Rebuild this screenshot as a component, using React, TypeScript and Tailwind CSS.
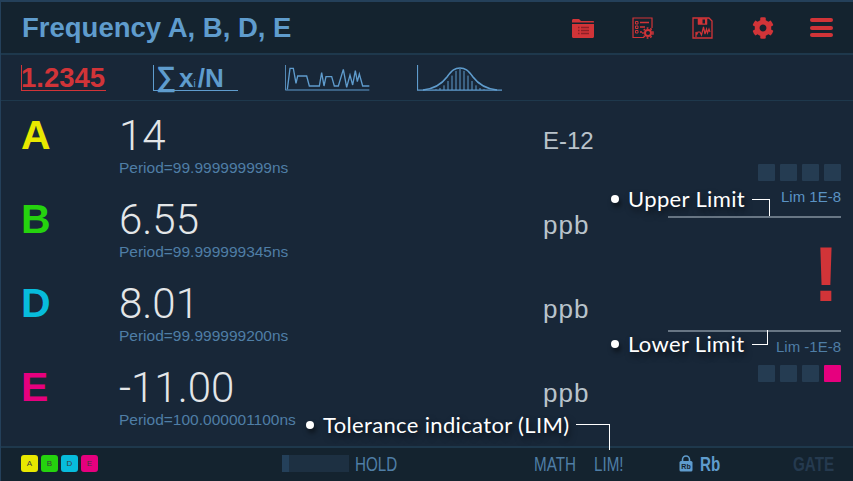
import React from 'react';
import { FaCog } from 'react-icons/fa';

const sans = 'font-["Liberation_Sans",Arial,sans-serif]';

const channels = [
  { letter: 'A', color: 'text-[#e8e800]', value: '14', period: 'Period=99.999999999ns', unit: 'E-12', unitClass: 'text-[24px]' },
  { letter: 'B', color: 'text-[#25d30e]', value: '6.55', period: 'Period=99.999999345ns', unit: 'ppb', unitClass: 'text-[26px] tracking-[1px]' },
  { letter: 'D', color: 'text-[#07bcdc]', value: '8.01', period: 'Period=99.999999200ns', unit: 'ppb', unitClass: 'text-[26px] tracking-[1px]' },
  { letter: 'E', color: 'text-[#e6007e]', value: '-11.00', period: 'Period=100.000001100ns', unit: 'ppb', unitClass: 'text-[26px] tracking-[1px]' },
];

const chips = [
  { letter: 'A', bg: 'bg-[#e8e800]' },
  { letter: 'B', bg: 'bg-[#25d30e]' },
  { letter: 'D', bg: 'bg-[#07bcdc]' },
  { letter: 'E', bg: 'bg-[#e6007e]' },
];

function FolderIcon() {
  return (
    <svg width="24" height="22" viewBox="0 0 24 22" fill="none">
      <path d="M1 3.500C1 2.700 1.600 2 2.400 2H8l2 2H22c.6 0 1 .4 1 1v.6H1z" fill="#d13438" />
      <path d="M1 7h22v12.500c0 .8-.6 1.500-1.500 1.500h-19C1.600 21 1 20.300 1 19.500z" fill="#d13438" />
      <path d="M7 10.500h1.500M7 13.500h1.500M7 16.500h1.500M10 10.500h8M10 13.500h8M10 16.500h8" stroke="#8e1f26" strokeWidth="1.600" />
    </svg>
  );
}

function ConfigIcon() {
  return (
    <svg width="22" height="22" viewBox="0 0 22 22" fill="none" stroke="#d13438">
      <path d="M12 20.500H1V1h19v10" strokeWidth="1.200" />
      <path d="M3.500 4.500h2.500v2.500H3.500zM3.500 9h2.500v2.500H3.500zM3.500 13.500h2.500v2.500H3.500z" strokeWidth="1" />
      <path d="M8 5.500h9M8 10h5M8 15h2" strokeWidth="1.400" />
      <circle cx="16" cy="16" r="3" strokeWidth="2" />
      <circle cx="16" cy="16" r="5" strokeWidth="1.500" strokeDasharray="1.800 1.800" />
    </svg>
  );
}

function SaveIcon() {
  return (
    <svg width="21" height="22" viewBox="0 0 21 22" fill="none" stroke="#d13438">
      <path d="M1 1h16l3 3v17H1z" strokeWidth="1.300" />
      <path d="M6 1.500h9v6H6z" fill="#d13438" strokeWidth="0.500" />
      <path d="M10.500 2.500h2.500v4h-2.500z" fill="#14232f" stroke="none" />
      <path d="M4 20v-5l1 2 1-2h2l1.500 3 2-8 1.500 7 1.500-5 1 4 1.500-4 1 3" strokeWidth="1.200" />
    </svg>
  );
}

function LockIcon() {
  return (
    <svg width="14" height="17" viewBox="0 0 14 17" fill="none">
      <path d="M3.500 7V4.500a3.500 3.500 0 0 1 7 0V7" stroke="#5f9ccd" strokeWidth="1.600" />
      <rect x="0.500" y="6" width="13" height="10.500" rx="1.500" fill="#5f9ccd" />
      <text x="7" y="14" textAnchor="middle" fontSize="7" fontWeight="700" fontFamily="Liberation Sans" fill="#14232f">Rb</text>
    </svg>
  );
}

function WaveChart() {
  return (
    <svg width="85" height="26" viewBox="855 195 255 78" fill="none" stroke="#5f9ccd" strokeWidth="4">
      <path d="M856 195V270H1108" strokeWidth="3" />
      <path d="M862 268L870 205H880L888 250L893 228H920L928 258H958L965 218L972 258L978 230H995L1003 258H1015L1030 208L1040 262L1050 225L1058 255L1066 212L1072 245L1078 222L1088 258H1108" />
    </svg>
  );
}

function BellChart() {
  const bars = [19, 23, 27, 31, 35, 39, 43, 47, 51, 55, 59, 63, 67];
  return (
    <svg width="85" height="26" viewBox="0 0 85 26" fill="none" stroke="#5f9ccd">
      <path d="M0.500 0V25.200H85" strokeWidth="1.200" />
      <path d="M6 25C16 24 24 20 30 12C35 5 38 3 43 3C48 3 51 5 56 12C62 20 70 24 80 25" strokeWidth="1.600" />
      {bars.map((x) => (
        <path key={x} d={`M${x} ${25 - 21 * Math.exp(-((x - 43) ** 2) / 170)}V25`} strokeWidth="1" />
      ))}
    </svg>
  );
}

function Squares({ lit }: { lit?: boolean }) {
  return (
    <div className="flex gap-[5px]">
      <div className="w-[17px] h-[17px] rounded-[1px] bg-[#253c52]" />
      <div className="w-[17px] h-[17px] rounded-[1px] bg-[#253c52]" />
      <div className="w-[17px] h-[17px] rounded-[1px] bg-[#253c52]" />
      <div className={`w-[17px] h-[17px] rounded-[1px] ${lit ? 'bg-[#e6007e]' : 'bg-[#253c52]'}`} />
    </div>
  );
}

function Callout({ label, className }: { label: string; className: string }) {
  return (
    <div className={`absolute flex items-center ${className}`}>
      <div className="w-[8px] h-[8px] rounded-full bg-white mr-[9px] [box-shadow:2px_4px_5px_rgba(0,0,0,0.5)]" />
      <span className='font-["Lato",sans-serif] text-[22px] tracking-[0.35px] leading-[26px] whitespace-nowrap text-white [text-shadow:2px_4px_6px_rgba(0,0,0,0.55)]'>
        {label}
      </span>
    </div>
  );
}

export default function App() {
  return (
    <div className={`relative w-[853px] h-[481px] overflow-hidden flex flex-col bg-[#182738] border-l border-[#24405a] ${sans}`}>
      {/* Title bar */}
      <header className="h-[55px] shrink-0 flex items-center pl-[21px] bg-[#14232f] border-t-2 border-b-2 border-t-[#24405a] border-b-[#1e384c]">
        <h1 className="text-[27.500px] leading-none font-bold text-[#5f9ccd] w-[549px]">Frequency A, B, D, E</h1>
        <div className="flex items-center w-[270px]">
          <div className="w-[61px]"><FolderIcon /></div>
          <div className="w-[60px]"><ConfigIcon /></div>
          <div className="w-[60px]"><SaveIcon /></div>
          <div className="w-[58px]"><FaCog className="w-[22px] h-[22px] text-[#d13438]" /></div>
          <div className="flex flex-col gap-[3.500px] w-[23px]">
            <div className="h-[4px] rounded-full bg-[#d13438]" />
            <div className="h-[4px] rounded-full bg-[#d13438]" />
            <div className="h-[4px] rounded-full bg-[#d13438]" />
          </div>
        </div>
      </header>

      {/* Display mode tabs */}
      <nav className="h-[46px] shrink-0 flex items-center gap-[47px] pl-[20px] border-b border-[#1e384c]">
        <div className="w-[85px] h-[26px] flex items-end border-l border-b border-[#d13438] text-[27.500px] leading-[25px] font-bold text-[#d13438]">
          <span className="-ml-[1px]">1.2345</span>
        </div>
        <div className="w-[85px] h-[26px] flex items-end border-l border-b border-[#5f9ccd] text-[#5f9ccd] text-[26px] leading-[24px] font-bold whitespace-nowrap">
          <span className="ml-[2px] text-[28px] leading-[26px]">∑</span>
          <span className="ml-[3px]">x</span>
          <span className="text-[10px] leading-[12px] font-normal mr-[2px]">i</span>
          <span>/N</span>
        </div>
        <WaveChart />
        <BellChart />
      </nav>

      {/* Readings */}
      <main className="flex-1 min-h-0 flex">
        <div className="pl-[20px] pt-[11px] flex flex-col">
          {channels.map((c) => (
            <div key={c.letter} className="h-[84px] shrink-0 flex">
              <div className={`w-[98px] text-[41px] leading-[46px] font-bold ${c.color}`}>{c.letter}</div>
              <div className="w-[424px]">
                <div className='font-["Roboto",sans-serif] font-light text-[42px] leading-[46px] text-[#e3e6e8] mt-[1px]'>{c.value}</div>
                <div className="text-[15.500px] leading-[18px] text-[#4f7ea6]">{c.period}</div>
              </div>
              <div className={`leading-[28px] text-[#b9c3cb] pt-[15px] ${c.unitClass}`}>{c.unit}</div>
            </div>
          ))}
        </div>

        {/* Tolerance limits */}
        <div className="ml-auto mr-[12px] w-[174px] flex flex-col items-end pt-[63px]">
          <Squares />
          <div className="mt-[7px] text-[15px] leading-[17px] text-[#5b93c4]">Lim 1E-8</div>
          <div className="mt-[11px] w-[173px] h-[2px] bg-[#687684]" />
          <div className="h-[112px] w-full flex items-center justify-end pr-[2px] text-[78px] leading-none font-bold text-[#d13438]">!</div>
          <div className="w-[173px] h-[2px] bg-[#687684]" />
          <div className="mt-[6px] text-[15px] leading-[17px] text-[#4f7ea6]">Lim -1E-8</div>
          <div className="mt-[10px]"><Squares lit /></div>
        </div>
      </main>

      {/* Status bar */}
      <footer className="h-[35px] shrink-0 flex items-center pl-[20px] pb-[2px] bg-[#14232f] border-t-2 border-[#1e384c] text-[20px] leading-none text-[#4f7ea6]">
        <div className="flex gap-[3px] w-[261px]">
          {chips.map((c) => (
            <div key={c.letter} className={`w-[17px] h-[17px] rounded-[3px] flex items-center justify-center text-[8px] text-[#3b3b3b] ${c.bg}`}>
              {c.letter}
            </div>
          ))}
        </div>
        <div className="w-[67px] h-[17px] flex bg-[#1d3042]">
          <div className="w-[7px] bg-[#24405a]" />
        </div>
        <div className="ml-[6px] w-[179px]"><span className="inline-block origin-left scale-x-[0.76]">HOLD</span></div>
        <div className="w-[60px]"><span className="inline-block origin-left scale-x-[0.76]">MATH</span></div>
        <div className="w-[85px]"><span className="inline-block origin-left scale-x-[0.76]">LIM!</span></div>
        <div className="w-[21px]"><LockIcon /></div>
        <div className="w-[93px] font-bold text-[#5f9ccd]"><span className="inline-block origin-left scale-x-[0.76]">Rb</span></div>
        <div className="font-bold text-[#253a4f]"><span className="inline-block origin-left scale-x-[0.76]">GATE</span></div>
      </footer>

      {/* Annotations lying over the display */}
      <Callout label="Upper Limit" className="left-[610px] top-[186px]" />
      <div className="absolute left-[751px] top-[199px] w-[18px] h-[17px] border-t border-r border-white" />
      <Callout label="Lower Limit" className="left-[610px] top-[331px]" />
      <div className="absolute left-[751px] top-[330px] w-[16px] h-[15px] border-b border-r border-white" />
      <Callout label="Tolerance indicator (LIM)" className="left-[305px] top-[412px]" />
      <div className="absolute left-[575px] top-[424px] w-[34px] h-[26px] border-t border-r border-white" />
    </div>
  );
}
